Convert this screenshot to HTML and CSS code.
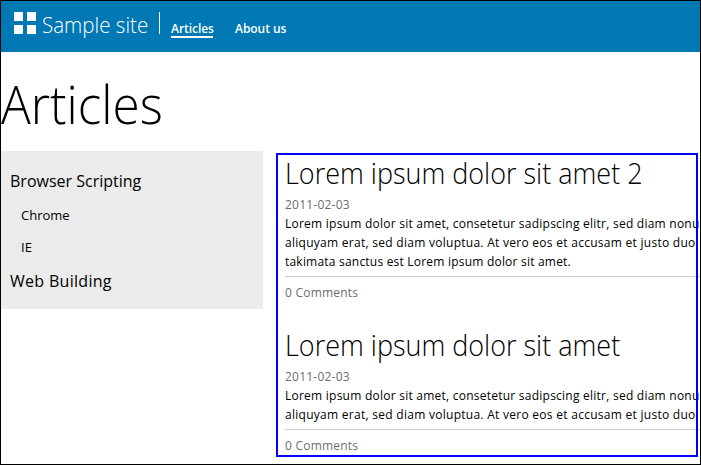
FILE: index.html
```html
<!DOCTYPE html>
<html lang="en">
<head>
<meta charset="utf-8">
<title>Articles - Sample site</title>
<link rel="stylesheet" href="styles.css">
</head>
<body>
<div class="page">
  <header class="header">
    <svg class="logo" width="22" height="22" viewBox="0 0 22 22" fill="#fff"><path d="M0 0h9v9H0zM13 0h9v9h-9zM0 13h9v9H0zM13 13h9v9h-9z"/></svg>
    <div class="brand"><span class="brand-name">Sample site</span></div>
    <nav class="nav"><a class="link active">Articles</a><a class="link about">About us</a></nav>
  </header>
  <h1 class="title"><span class="title-text">Articles</span></h1>
  <div class="columns">
    <aside class="sidebar">
      <div class="category">Browser Scripting</div>
      <div class="sub">Chrome</div>
      <div class="sub">IE</div>
      <div class="category web">Web Building</div>
    </aside>
    <main class="list">
      <article class="article">
        <h2 class="heading"><span class="heading-text">Lorem ipsum dolor sit amet 2</span></h2>
        <div class="date">2011-02-03</div>
        <div class="text">
          <div class="l1">Lorem ipsum dolor sit amet, consetetur sadipscing elitr, sed diam nonu</div>
          <div class="l2">aliquyam erat, sed diam voluptua. At vero eos et accusam et justo duo</div>
          <div class="l3">takimata sanctus est Lorem ipsum dolor sit amet.</div>
        </div>
        <div class="comments">0 Comments</div>
      </article>
      <article class="article">
        <h2 class="heading"><span class="heading-text">Lorem ipsum dolor sit amet</span></h2>
        <div class="date">2011-02-03</div>
        <div class="text">
          <div class="l1">Lorem ipsum dolor sit amet, consetetur sadipscing elitr, sed diam nonu</div>
          <div class="l2">aliquyam erat, sed diam voluptua. At vero eos et accusam et justo duo</div>
        </div>
        <div class="comments">0 Comments</div>
      </article>
      <div class="highlight"></div>
    </main>
  </div>
</div>
</body>
</html>
```
FILE: styles.css
```css
* { box-sizing: border-box; }
body { margin: 0; background: #fff; color: #000; font-family: "Open Sans", "Noto Sans", sans-serif; }
.page { width: 701px; height: 465px; border: 1px solid #000; overflow: hidden; white-space: nowrap; }
.header { display: flex; align-items: flex-start; height: 51px; padding: 11px 0 0 13px; background: #0078b4; color: #fff; }
.logo { flex: none; }
.brand { flex: none; width: 118px; height: 22px; margin-left: 6px; border-right: 1px solid #fff; font-size: 22px; font-weight: 300; line-height: 24px; }
.brand-name, .title-text, .heading-text { display: inline-block; transform-origin: 0 0; }
.brand-name { transform: scaleX(.935); }
.nav { display: flex; gap: 22px; padding: 8px 0 0 11px; font-size: 12px; font-weight: 600; line-height: 17px; }
.link { height: 18px; letter-spacing: -.05px; }
.active { width: 42px; border-bottom: 2px solid #fff; }
.title { height: 99px; margin: 0; font-size: 54px; font-weight: 300; line-height: 103px; }
.title-text { transform: scaleX(.917); }
.columns { display: flex; align-items: flex-start; }
.sidebar { flex: none; width: 262px; height: 158px; padding: 16px 9px; background: #ebebeb; }
.category { height: 32px; font-size: 16px; line-height: 28px; }
.sub { height: 32px; padding-left: 11px; font-size: 13px; line-height: 32px; }
.web { padding-top: 4px; letter-spacing: .3px; }
.list { position: relative; width: 438px; height: 313px; padding: 4px 0 0 22px; }
.article { height: 172px; }
.heading { height: 40px; margin: 0; font-size: 29px; font-weight: 300; line-height: 36px; }
.heading-text { transform: scaleX(.93); }
.date, .comments { color: #6d6d6d; font-size: 12px; letter-spacing: .22px; }
.date { height: 19px; line-height: 19px; }
.text { font-size: 12px; line-height: 19px; letter-spacing: .24px; }
.l2 { letter-spacing: .275px; }
.l3 { letter-spacing: .21px; }
.comments { margin-top: 5px; border-top: 1px solid #ccc; line-height: 32px; }
.highlight { position: absolute; left: 13px; top: 2px; width: 422px; height: 304px; border: 2px solid #00f; }
```
